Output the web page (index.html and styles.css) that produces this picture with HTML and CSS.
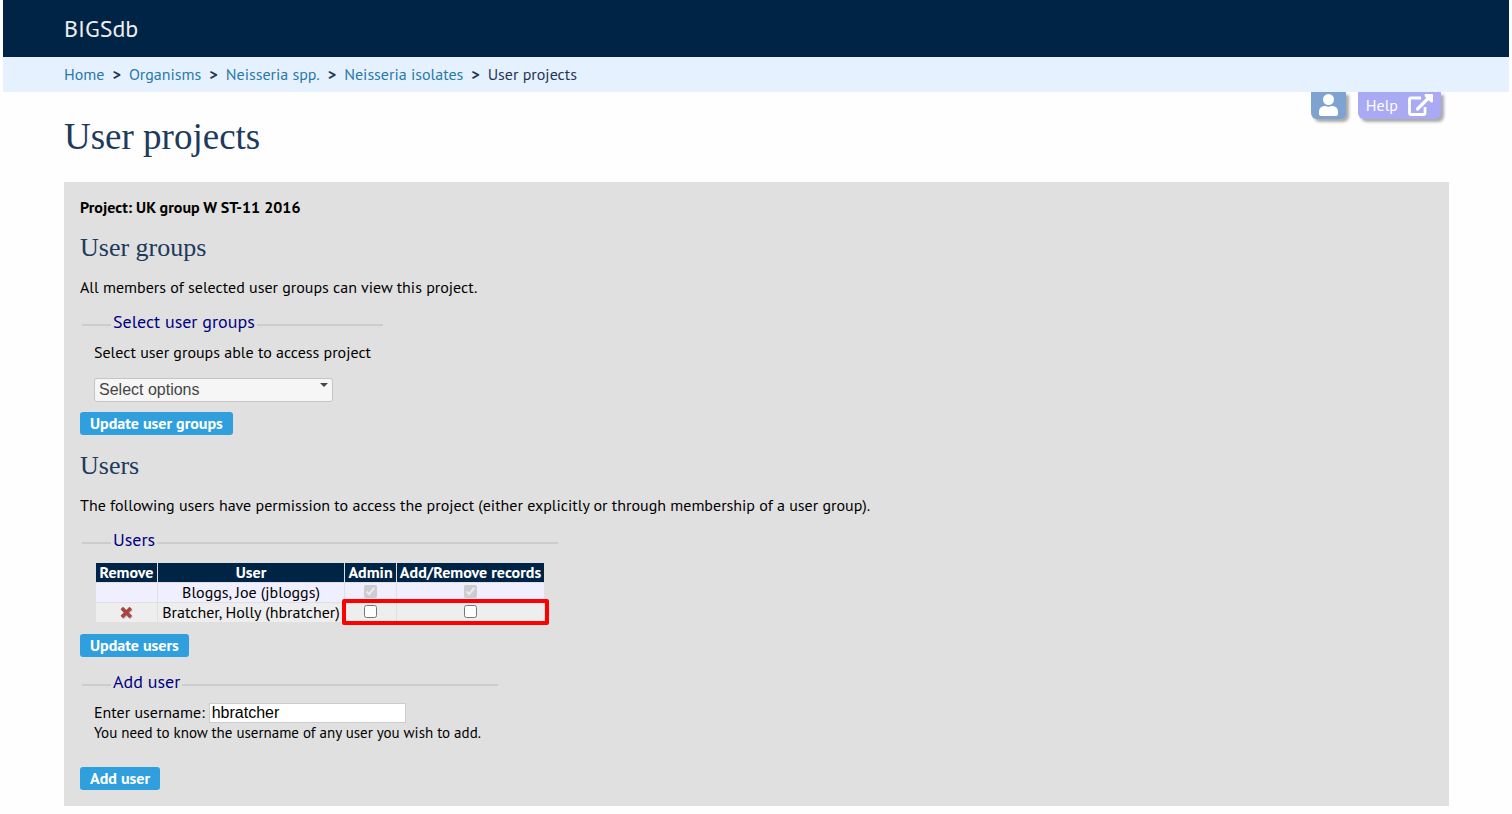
FILE: index.html
```html
<!DOCTYPE html>
<html lang="en">
<head>
	<meta charset="UTF-8">
	<meta name="viewport" content="width=device-width, initial-scale=1.0">
	<title>User projects</title>
	<link rel="stylesheet" href="styles.css">
</head>
<body>
<header class="title_container">BIGSdb</header>
<nav class="breadcrumbs">
	<a href="#">Home</a>
	<span class="separator">&gt;</span>
	<a href="#">Organisms</a>
	<span class="separator">&gt;</span>
	<a href="#">Neisseria spp.</a>
	<span class="separator">&gt;</span>
	<a href="#">Neisseria isolates</a>
	<span class="separator">&gt;</span>
	<span>User projects</span>
</nav>

<main class="main_content">
	<!-- tabs hanging under the breadcrumbs -->
	<div class="menu_tabs">
		<a class="tab user_tab" href="#" aria-label="User">
			<svg width="19" height="22" viewBox="0 0 19 22" fill="#fff">
				<circle cx="9.5" cy="5.5" r="5.5"/>
				<path d="M5.4 12h1a7.500 7.500 0 0 0 6.200 0h1a5.400 5.400 0 0 1 5.400 5.400V20a2 2 0 0 1-2 2H2a2 2 0 0 1-2-2v-2.600A5.400 5.400 0 0 1 5.400 12z"/>
			</svg>
		</a>
		<a class="tab help_tab" href="#">Help
			<svg width="25" height="22" viewBox="0 0 25 22" fill="none" stroke="#fff">
				<path d="M13 4H2.500a1 1 0 0 0-1 1v14.500a1 1 0 0 0 1 1H16a1 1 0 0 0 1-1V13" stroke-width="2.800"/>
				<path d="M9.500 15 21 3.500" stroke-width="3.200" stroke-linecap="round"/>
				<path d="M17 0h7a1 1 0 0 1 1 1v7l-2 .5L16.500 2z" fill="#fff" stroke="none"/>
			</svg>
		</a>
	</div>

	<h1>User projects</h1>

	<div class="box">
		<p class="project">Project: UK group W ST-11 2016</p>
		<h2>User groups</h2>
		<p>All members of selected user groups can view this project.</p>
		<form>
			<fieldset class="groups">
				<legend>Select user groups</legend>
				<label for="user_groups">Select user groups able to access project</label>
				<div class="multiselect">
					<select id="user_groups">
						<option>Select options</option>
					</select>
					<svg class="caret" width="8" height="4" viewBox="0 0 8 4"><path d="M0 0h8L4 4z" fill="#454545"/></svg>
				</div>
			</fieldset>
			<button type="submit">Update user groups</button>
		</form>

		<h2>Users</h2>
		<p>The following users have permission to access the project (either explicitly or through membership of a user group).</p>
		<form>
			<fieldset class="users">
				<legend>Users</legend>
				<div class="table_wrapper">
					<table>
						<colgroup>
							<col class="col_remove">
							<col class="col_user">
							<col class="col_admin">
							<col class="col_records">
						</colgroup>
						<thead>
							<tr><th>Remove</th><th>User</th><th>Admin</th><th>Add/Remove records</th></tr>
						</thead>
						<tbody>
							<tr class="td1">
								<td></td>
								<td>Bloggs, Joe (jbloggs)</td>
								<td><input type="checkbox" aria-label="Admin: jbloggs" checked disabled></td>
								<td><input type="checkbox" aria-label="Add/Remove records: jbloggs" checked disabled></td>
							</tr>
							<tr class="td2">
								<td>
									<a class="remove" href="#" aria-label="Remove hbratcher"><svg width="14" height="14" viewBox="0 0 14 14" fill="none" stroke-width="3.600"><path d="M2.500 3 11.500 12M11.500 3 2.500 12" stroke="#bbb"/><path d="M1.800 2l9 9M10.800 2l-9 9" stroke="#a44"/></svg></a>
								</td>
								<td>Bratcher, Holly (hbratcher)</td>
								<td><input type="checkbox" aria-label="Admin: hbratcher"></td>
								<td><input type="checkbox" aria-label="Add/Remove records: hbratcher"></td>
							</tr>
						</tbody>
					</table>
					<div class="highlight"></div>
				</div>
			</fieldset>
			<button type="submit">Update users</button>
		</form>

		<form>
			<fieldset class="add_user">
				<legend>Add user</legend>
				<div class="field">
					<label for="username">Enter username:</label>
					<input type="text" id="username" value="hbratcher">
				</div>
				<p class="comment">You need to know the username of any user you wish to add.</p>
			</fieldset>
			<button type="submit">Add user</button>
		</form>
	</div>
</main>
</body>
</html>
```
FILE: styles.css
```css
body {
	margin: 0 3px;
	background: #fefefe;
	color: #000;
	font: 16px/20px "PT Sans", "Noto Sans", sans-serif;
}
.title_container {
	background: #002446;
	color: #eee;
	font-size: 24px;
	line-height: 57px;
	padding: 0 61px;
}
.breadcrumbs {
	display: flex;
	gap: 8px;
	background: #e6f1ff;
	color: #1e3655;
	line-height: 35px;
	padding: 0 61px;
}
.breadcrumbs a {
	color: #2779aa;
	text-decoration: none;
}
.separator {
	font-weight: bold;
}
.main_content {
	position: relative;
	padding: 0 60px 8px 61px;
}
.menu_tabs {
	position: absolute;
	top: 0;
	right: 68px;
	display: flex;
	gap: 12px;
}
.tab {
	display: flex;
	align-items: center;
	gap: 10px;
	height: 27px;
	padding: 0 8px 1px;
	box-sizing: border-box;
	border-radius: 0 0 6px 6px;
	box-shadow: 3px 3px 3px #aaa;
	color: #fff;
	text-decoration: none;
}
.user_tab {
	background: #7ea3d1;
}
.help_tab {
	background: #a9a9f4;
}
h1, h2 {
	font-family: "Liberation Serif", serif;
	font-weight: normal;
	color: #203a5c;
}
h1 {
	margin: 0;
	padding: 24px 0;
	font-size: 37px;
	line-height: 42px;
}
h2 {
	margin: 17px 0 15px;
	font-size: 26px;
	line-height: 28px;
}
p {
	margin: 0;
}
.box {
	background: #e0e0e0;
	padding: 15px 16px 16px;
}
.project {
	font-weight: bold;
}
fieldset {
	box-sizing: border-box;
	max-width: 100%;
	margin: 16px 2px 0;
	padding: 5px 12px 10px;
	border: 0;
	border-top: 2px solid #ccc;
}
.groups {
	width: 300px;
	white-space: nowrap;
}
.users {
	width: 476px;
}
.add_user {
	width: 416px;
}
legend {
	margin-left: 17px;
	padding: 0 2px 6px;
	color: navy;
	font-size: 18px;
	line-height: 18px;
}
.multiselect {
	position: relative;
	width: 239px;
	margin-top: 16px;
}
.multiselect select {
	display: block;
	appearance: none;
	box-sizing: border-box;
	width: 100%;
	height: 24px;
	padding: 0 4px 2px;
	border: 1px solid #c5c5c5;
	border-radius: 3px;
	background: #f6f6f6;
	color: #454545;
	font: 16px "Liberation Sans", Arial, sans-serif;
}
.caret {
	position: absolute;
	top: 5px;
	right: 5px;
	pointer-events: none;
}
button {
	display: block;
	height: 23px;
	padding: 0 10px 2px;
	border: 0;
	border-radius: 3px;
	background: #2f9fde;
	color: #fff;
	font: bold 16px/20px "PT Sans", "Noto Sans", sans-serif;
	cursor: pointer;
}
.table_wrapper {
	position: relative;
	width: 450px;
	margin: 2px 0 1px 1px;
}
table {
	width: 100%;
	table-layout: fixed;
	border-spacing: 1px;
}
.col_remove {
	width: 61px;
}
.col_user {
	width: 186px;
}
.col_admin {
	width: 51px;
}
.col_records {
	width: 147px;
}
th, td {
	height: 19px;
	padding: 0;
	line-height: 19px;
	text-align: center;
	white-space: nowrap;
}
th {
	background: #002446;
	color: #fff;
}
.td1 {
	background: #efefff;
}
.td2 {
	background: #eee;
}
td input {
	display: block;
	width: 13px;
	height: 13px;
	margin: 0 auto 2px;
}
.remove {
	display: block;
	height: 14px;
	line-height: 0;
}
/* red frame round the permissions of the new user */
.highlight {
	position: absolute;
	right: -4px;
	bottom: -2px;
	box-sizing: border-box;
	width: 207px;
	height: 26px;
	border: 4px solid #f00;
	border-radius: 2px;
	pointer-events: none;
}
.field {
	display: flex;
	gap: 4px;
	margin-top: 1px;
	line-height: 18px;
}
.field input {
	box-sizing: border-box;
	width: 197px;
	height: 20px;
	padding: 0 2px;
	border: 1px solid #ccc;
	font: 16px "Liberation Sans", Arial, sans-serif;
}
.comment {
	font-size: 15px;
	margin-bottom: 14px;
}
```
